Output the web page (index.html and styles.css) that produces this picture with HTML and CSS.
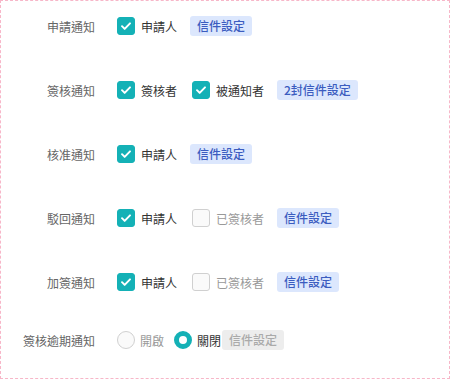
FILE: index.html
```html
<!DOCTYPE html>
<html lang="zh-Hant">
<head>
  <meta charset="UTF-8" />
  <meta name="viewport" content="width=device-width, initial-scale=1.0" />
  <title>通知設定</title>
  <link rel="stylesheet" href="styles.css">
</head>
<body>

  <div class="notify-panel">

    <div class="notify-row">
      <div class="row-label">申請通知</div>
      <div class="row-body">
        <span class="check on"><svg viewBox="0 0 18 18"><path d="M4.5 9.2l3 3 6-6.2" /></svg></span>
        <span class="check-text">申請人</span>
        <span class="mail-tag">信件設定</span>
      </div>
    </div>

    <div class="notify-row">
      <div class="row-label">簽核通知</div>
      <div class="row-body">
        <span class="check on"><svg viewBox="0 0 18 18"><path d="M4.5 9.2l3 3 6-6.2" /></svg></span>
        <span class="check-text">簽核者</span>
        <span class="check on"><svg viewBox="0 0 18 18"><path d="M4.5 9.2l3 3 6-6.2" /></svg></span>
        <span class="check-text">被通知者</span>
        <span class="mail-tag">2封信件設定</span>
      </div>
    </div>

    <div class="notify-row">
      <div class="row-label">核准通知</div>
      <div class="row-body">
        <span class="check on"><svg viewBox="0 0 18 18"><path d="M4.5 9.2l3 3 6-6.2" /></svg></span>
        <span class="check-text">申請人</span>
        <span class="mail-tag">信件設定</span>
      </div>
    </div>

    <div class="notify-row">
      <div class="row-label">駁回通知</div>
      <div class="row-body">
        <span class="check on"><svg viewBox="0 0 18 18"><path d="M4.5 9.2l3 3 6-6.2" /></svg></span>
        <span class="check-text">申請人</span>
        <span class="check"></span>
        <span class="check-text off">已簽核者</span>
        <span class="mail-tag">信件設定</span>
      </div>
    </div>

    <div class="notify-row">
      <div class="row-label">加簽通知</div>
      <div class="row-body">
        <span class="check on"><svg viewBox="0 0 18 18"><path d="M4.5 9.2l3 3 6-6.2" /></svg></span>
        <span class="check-text">申請人</span>
        <span class="check"></span>
        <span class="check-text off">已簽核者</span>
        <span class="mail-tag">信件設定</span>
      </div>
    </div>

    <div class="notify-row last">
      <div class="row-label">簽核逾期通知</div>
      <div class="row-body">
        <span class="radio"></span>
        <span class="radio-text off">開啟</span>
        <span class="radio on"></span>
        <span class="radio-text tight">關閉</span>
        <span class="mail-tag disabled">信件設定</span>
      </div>
    </div>

  </div>

</body>
</html>
```

FILE: styles.css
```css
body {
  margin: 0;
  padding: 0;
  font-family: "Noto Sans CJK TC", "Noto Sans", sans-serif;
  font-size: 12px;
  background-color: #fff;
}

.notify-panel {
  width: 450px;
  height: 379px;
  box-sizing: border-box;
  border: 1px dashed #f7b6c8;
  padding-top: 14px;
}

.notify-row {
  display: flex;
  align-items: center;
  height: 22px;
  margin-bottom: 42px;
}

.notify-row.last {
  margin-top: -6px;
}

.row-label {
  width: 94px;
  text-align: right;
  color: #666;
  flex-shrink: 0;
}

.row-body {
  display: flex;
  align-items: center;
  margin-left: 22px;
}

.check {
  width: 18px;
  height: 18px;
  box-sizing: border-box;
  border: 1px solid #d0d0d0;
  border-radius: 3px;
  background-color: #fafafa;
  display: flex;
}

.check.on {
  background-color: #14b1b6;
  border-color: #14b1b6;
}

.check svg {
  width: 16px;
  height: 16px;
}

.check svg path {
  fill: none;
  stroke: #fff;
  stroke-width: 2.2;
  stroke-linecap: round;
  stroke-linejoin: round;
}

.check-text {
  color: #333;
  margin-left: 6px;
  margin-right: 15px;
}

.check-text.off,
.radio-text.off {
  color: #999;
}

.notify-row .check-text:nth-last-child(2) {
  margin-right: 13px;
}

.radio {
  width: 18px;
  height: 18px;
  box-sizing: border-box;
  border: 1px solid #d0d0d0;
  border-radius: 50%;
  background-color: #fafafa;
}

.radio.on {
  border: 5px solid #14b1b6;
  background-color: #fff;
}

.radio-text {
  color: #333;
  margin-left: 5px;
  margin-right: 10px;
}

.radio-text.tight {
  margin-right: 1px;
}

.mail-tag {
  background-color: #dce7fd;
  color: #3b5cc0;
  font-weight: 500;
  padding: 1px 7px;
  border-radius: 3px;
  line-height: 18px;
}

.mail-tag.disabled {
  background-color: #ededed;
  color: #aaa;
}
```
